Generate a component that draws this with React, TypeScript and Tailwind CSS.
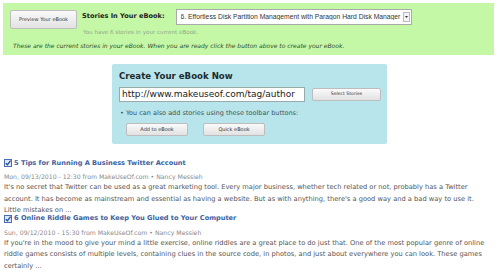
import { useState } from 'react'

const stories = [
  {
    title: '5 Tips for Running A Business Twitter Account',
    meta: 'Mon, 09/13/2010 - 12:30 from MakeUseOf.com • Nancy Messieh',
    lines: [
      "It's no secret that Twitter can be used as a great marketing tool. Every major business, whether tech related or not, probably has a Twitter",
      "account. It has become as mainstream and essential as having a website. But as with anything, there's a good way and a bad way to use it.",
      'Little mistakes on ...'
    ]
  },
  {
    title: '6 Online Riddle Games to Keep You Glued to Your Computer',
    meta: 'Sun, 09/12/2010 - 15:30 from MakeUseOf.com • Nancy Messieh',
    lines: [
      "If you're in the mood to give your mind a little exercise, online riddles are a great place to do just that. One of the most popular genre of online",
      'riddle games consists of multiple levels, containing clues in the source code, in photos, and just about everywhere you can look. These games',
      'certainly ...'
    ]
  }
]

function CheckIcon() {
  return (
    <svg width="8" height="8" viewBox="0 0 8 8" className="shrink-0">
      <rect x="0.5" y="0.5" width="7" height="7" fill="#dfe8f7" stroke="#4a6fb0" />
      <path d="M1.8 4.2 L3.4 5.8 L6.6 1.6" fill="none" stroke="#2c4f99" strokeWidth="1.4" />
    </svg>
  )
}

const btn =
  'bg-gradient-to-b from-[#fafafa] to-[#e2e2e2] border border-[#bdbdbd] rounded-[2px] text-[#333] leading-none'

export default function App() {
  const [selected, setSelected] = useState('6')

  return (
    <div className="w-[499px] h-[272px] bg-white overflow-hidden pt-[3px] font-['DejaVu_Sans',Verdana,sans-serif]">
      <div className="mx-[3px] w-[491px] h-[52px] bg-[#c4f8a6] pt-[6px] pl-[7px]">
        <div className="flex items-start">
          <button className={`${btn} w-[67px] h-[19px] text-[5px] mt-[1px]`}>Preview Your eBook</button>
          <div className="ml-[5px]">
            <div className="flex items-start">
              <span className="text-[6.6px] font-bold text-[#222] mr-[11px] mt-[3px]">Stories In Your eBook:</span>
              <div className="relative w-[236px] h-[16px]">
                <select
                  value={selected}
                  onChange={(e) => setSelected(e.target.value)}
                  className="block w-[236px] h-[16px] border border-[#aaa] bg-white text-[6.75px] text-[#333] pl-[4px] py-0 leading-none appearance-none font-['Liberation_Sans',Arial,sans-serif]"
                >
                  <option value="6">6. Effortless Disk Partition Management with Paragon Hard Disk Manager</option>
                </select>
                <span className="absolute right-[2px] top-[3px] w-[7px] h-[10px] border border-[#bbb] bg-[#f4f4f4] flex items-center justify-center">
                  <svg width="3" height="2" viewBox="0 0 3 2">
                    <path d="M0 0 H3 L1.5 2 Z" fill="#333" />
                  </svg>
                </span>
              </div>
            </div>
            <div className="text-[5.6px] text-[#8fa88a] mt-[3px] pl-[1px]">
              You have 6 stories in your current eBook.
            </div>
          </div>
        </div>
        <div className="text-[6px] italic text-[#2f4a26] mt-[5px] pl-[3px]">
          These are the current stories in your eBook. When you are ready click the button above to create your eBook.
        </div>
      </div>

      <div className="ml-[112px] mt-[9px] w-[275px] h-[80px] bg-[#b8e5ec] rounded-[2px] pt-[8px] pl-[7px]">
        <div className="text-[8.6px] font-bold text-[#1e2a2e] leading-none">Create Your eBook Now</div>
        <div className="flex items-center mt-[6px]">
          <div className="w-[186px] h-[15px] bg-white border border-[#9aa] overflow-hidden whitespace-nowrap text-[9px] leading-[13px] text-[#222] pl-[2px]">
            http://www.makeuseof.com/tag/author
          </div>
          <button className={`${btn} ml-[7px] w-[69px] h-[13px] text-[4.6px]`}>Select Stories</button>
        </div>
        <div className="text-[6.5px] text-[#3d5559] mt-[8px] pl-[1px] leading-none">
          • You can also add stories using these toolbar buttons:
        </div>
        <div className="flex gap-[15px] mt-[7px] pl-[7px]">
          <button className={`${btn} w-[62px] h-[13px] text-[5px]`}>Add to eBook</button>
          <button className={`${btn} w-[62px] h-[13px] text-[5px]`}>Quick eBook</button>
        </div>
      </div>

      <div className="px-[4px] mt-[15px] flex flex-col">
        {stories.map((s) => (
          <div key={s.title} className="-mb-[2px]">
            <div className="flex items-center gap-[2px]">
              <CheckIcon />
              <span className="text-[6.6px] font-bold text-[#3c62a0] leading-none">{s.title}</span>
            </div>
            <div className="text-[6.2px] text-[#8a8a8a] mt-[7px] leading-none">{s.meta}</div>
            <div className="text-[6.7px] text-[#555] leading-[11.5px] mt-[2px]">
              {s.lines.map((l) => (
                <div key={l} className="whitespace-nowrap">
                  {l}
                </div>
              ))}
            </div>
          </div>
        ))}
      </div>
    </div>
  )
}
